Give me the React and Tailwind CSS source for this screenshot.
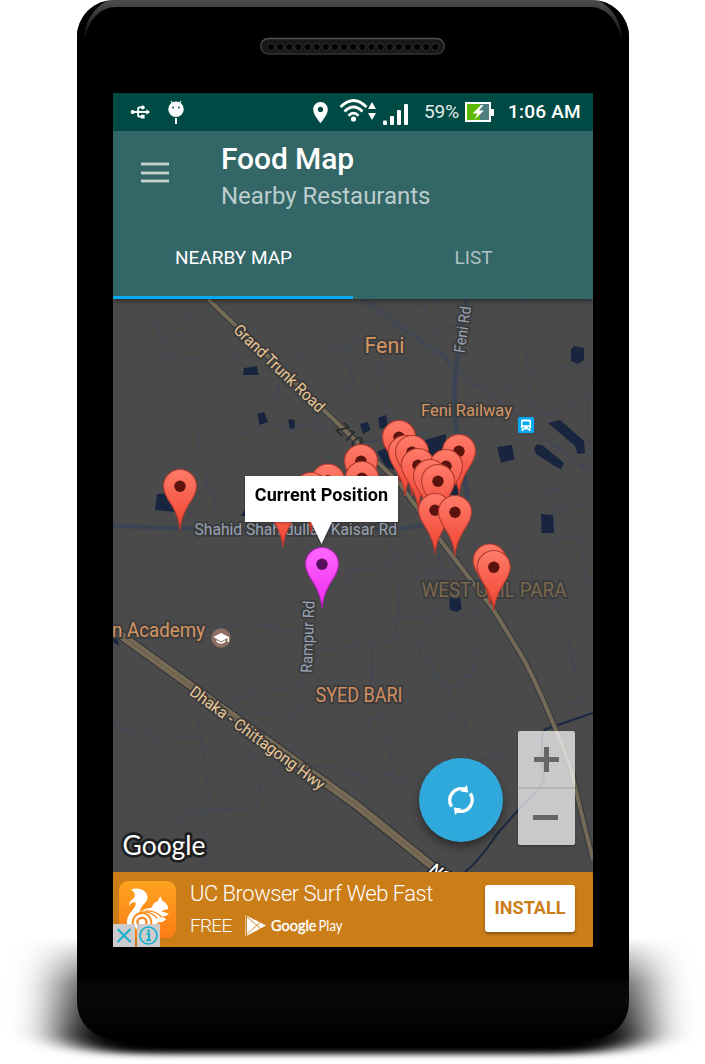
import React from "react";
import { MdLocationOn, MdUsb } from "react-icons/md";

const FONT = "Roboto, 'Noto Sans', sans-serif";

function Handset({ children }) {
  return (
    <div className="relative isolate mx-auto h-[1064px] w-[705px] overflow-hidden bg-white font-['Roboto',sans-serif]">
      <svg className="absolute inset-0 -z-10" width="705" height="1064" aria-hidden="true">
        <defs>
          <filter id="floor" x="-20%" y="-20%" width="140%" height="140%">
            <feGaussianBlur stdDeviation="23 3" />
          </filter>
          <linearGradient id="fade" x1="0" y1="938" x2="0" y2="1040" gradientUnits="userSpaceOnUse">
            <stop offset="0" stopColor="#fff" stopOpacity="0" />
            <stop offset="0.45" stopColor="#fff" stopOpacity="0.65" />
            <stop offset="1" stopColor="#fff" />
          </linearGradient>
          <mask id="floorMask" maskUnits="userSpaceOnUse" x="0" y="0" width="705" height="1064">
            <rect width="705" height="1064" fill="url(#fade)" />
          </mask>
        </defs>
        <g mask="url(#floorMask)">
          <path d="M60 900H646V1034Q630 1054 560 1054H146Q76 1054 60 1034Z" filter="url(#floor)" />
        </g>
      </svg>
      <div className="ml-[77px] flex h-[1039px] w-[552px] flex-col items-center overflow-hidden rounded-[37px] bg-black bg-[linear-gradient(to_bottom,#4a4a4a_0,#444_6px,#000_7px,#000_981px,#060606_981px,#080808_1000px,#000_1036px)]">
        <svg className="h-[93px] w-[552px] shrink-0" viewBox="77 0 552 93">
          <defs>
            <linearGradient id="rim" x1="0" y1="0" x2="0" y2="1">
              <stop offset="0" stopColor="#505050" />
              <stop offset="1" stopColor="#333" />
            </linearGradient>
            <linearGradient id="corner" x1="0" y1="0" x2="0" y2="45" gradientUnits="userSpaceOnUse">
              <stop offset="0" stopColor="#4c4c4c" />
              <stop offset="0.35" stopColor="#353535" />
              <stop offset="1" stopColor="#000" />
            </linearGradient>
          </defs>
          <path d="M77 0H629V45H77Z" fill="url(#corner)" />
          <path d="M77 93V37C77 18 90 4 108 0C92 9 84 22 84 42C88 20 100 7 116 7H590C606 7 618 20 622 42C622 22 614 9 598 0C616 4 629 18 629 37V93Z" fill="#000" />
          <rect x="260.7" y="38.5" width="183.6" height="15.5" rx="7.7" fill="#181818" stroke="url(#rim)" strokeWidth="1.4" />
          {Array.from({ length: 19 }, (_, i) => (
            <circle key={i} cx={271 + i * 9.13} cy="47" r="3.6" fill="#000" stroke="#353535" strokeWidth="0.9" />
          ))}
        </svg>
        <div className="flex h-[854px] w-[480px] shrink-0 flex-col overflow-hidden">{children}</div>
      </div>
    </div>
  );
}

function StatusBar() {
  return (
    <div className="flex h-[38px] shrink-0 items-center bg-[#004a46] text-white">
      <MdUsb className="ml-[16px] h-[22px] w-[22px] rotate-90" />
      <svg className="ml-[16px] h-[24px] w-[18px]" viewBox="0 0 18 24" fill="#fff">
        <path d="M4 1L6 4M14 1L12 4" stroke="#fff" strokeWidth="1.1" />
        <circle cx="9" cy="9.3" r="7.7" />
        <circle cx="6" cy="7.5" r=".9" fill="#004a46" />
        <circle cx="12" cy="7.5" r=".9" fill="#004a46" />
        <path d="M8 18H10V24H8Z" />
      </svg>
      <MdLocationOn className="ml-[123px] h-[25px] w-[25px]" />
      <svg className="ml-[6px] h-[28px] w-[37px]" viewBox="339 98 37 28" fill="none" stroke="#fff">
        <g strokeWidth="2.8">
          <path d="M340.5 107Q353.500 94 366.500 107" />
          <path d="M344.500 111.500Q353.500 102.500 362.500 111.500" />
          <path d="M348.500 115.800Q353.500 110.500 358.500 115.800" />
        </g>
        <circle cx="353.500" cy="119" r="2.600" fill="#fff" stroke="none" />
        <path d="M372 102L376 109H368ZM368 113H376L372 120Z" fill="#fff" stroke="none" />
      </svg>
      <svg className="ml-[7px] h-[28px] w-[26px]" viewBox="383 98 26 28" fill="#fff">
        <rect x="383" y="120.500" width="4" height="4.500" rx="1" />
        <rect x="390" y="116" width="4" height="9" rx="1" />
        <rect x="397" y="110" width="4" height="15" rx="1" />
        <rect x="404" y="104" width="4" height="21" rx="1" />
      </svg>
      <span className="ml-[15px] w-[41px] pt-[1px] text-[19px] tracking-[-0.1px] text-[#e3eeec]">59%</span>
      <svg className="h-[20px] w-[30px]" viewBox="465 103 30 20">
        <path d="M465 103H491V110H494V117H491V123H465Z" fill="#fff" />
        <path d="M467 105H480V121H467Z" fill="#5cb800" />
        <path d="M480 105H489V121H480Z" fill="#4d7f7f" />
        <path d="M481 106L472.500 114.500H477.500L474.500 120.500L484 111.500H479L483.500 106Z" fill="#fff" />
      </svg>
      <span className="ml-[13px] whitespace-nowrap pt-[1px] text-[19px] font-medium tracking-[0.2px]">1:06 AM</span>
    </div>
  );
}

function AppBar() {
  return (
    <header className="relative z-10 flex h-[168px] shrink-0 flex-col bg-[#336666] text-white shadow-[0_2px_5px_rgba(0,0,0,0.4)]">
      <div className="flex h-[84px]">
        <button className="ml-[28px] mt-[31px] flex h-[21px] w-[28px] flex-col justify-between" aria-label="Menu">
          <span className="h-[4px] w-full border-y border-[#6f9391] bg-[#c4d2d1]" />
          <span className="h-[4px] w-full border-y border-[#6f9391] bg-[#c4d2d1]" />
          <span className="h-[4px] w-full border-y border-[#6f9391] bg-[#c4d2d1]" />
        </button>
        <div className="ml-[52px] pt-[8px]">
          <h1 className="text-[30px] font-medium leading-[40px] tracking-[-0.1px]">Food Map</h1>
          <p className="text-[24px] leading-[34px] tracking-[-0.03px] text-[#bccdcd]">Nearby Restaurants</p>
        </div>
      </div>
      <div className="flex flex-1 text-[19px]">
        <div className="flex w-1/2 items-center justify-center border-b-[3px] border-[#03a9f4] pt-[5px] pl-[1px]">NEARBY MAP</div>
        <div className="flex w-1/2 items-center justify-center border-b-[3px] border-transparent pt-[5px] pl-[1px] text-[#adc2c2]">LIST</div>
      </div>
    </header>
  );
}

const LANES = [
  [110, 290, "M9 60H95L104 90L137 93L151 145L170 143L223 133Q229 120 229 78Q245 68 300 55M170 146Q164 155 162 200M110 255L120 223L145 205L160 200L225 201L237 208L310 203L382 194L390 208L435 196M530 232Q560 192 600 184Q650 174 735 162M712 168L720 225L730 275L680 320L655 340L622 360V400L632 421L675 416M530 270L503 284L512 320L495 322V404M622 402L560 405Q555 425 540 423Q530 420 528 407L495 404L434 412L430 428L360 433L266 431L270 485L285 530L298 600"],
  [350, 290, "M0 160L50 145M0 220L8 275M100 205L83 215L82 235L90 240L104 330L120 405M220 28L230 90L232 120L250 122L330 100M265 28Q245 90 253 150L300 230M516 28L530 200L540 335M540 256L600 244L625 235L660 227H729M717 28L720 180L714 220L729 285M310 235Q370 228 410 255L500 310L585 375L625 369L715 313L714 370L722 500L735 510M0 462L170 440L300 412Q320 420 322 450"],
  [110, 480, "M285 0L298 27L314 30L318 130M735 270H712L711 310L660 315L600 320L596 370M240 445L340 440L430 430L440 433L482 438L495 447L545 454L575 452M616 520L630 506H680L735 500M580 575V600"],
  [350, 480, "M0 270L125 262L127 230L117 160M127 230L200 225L262 207M265 222L285 290L320 258M145 305L200 298L215 285L280 270M145 305L148 390L130 480L65 490L0 500M65 490V600M130 480L208 478M145 410H240M318 380L245 400L248 492H210L208 478M210 495L213 540L247 545V600M395 65L445 60L460 45L560 38L610 30Q640 20 645 55Q650 80 620 88L612 90L617 170L613 220L587 250V305L600 355L625 370L655 480L680 600M617 172H692L709 290L729 325M620 88L729 67M460 160L470 165L490 195L545 265L549 305L490 320M370 190L400 245L430 280M320 405L345 410L405 390M458 460L446 472L445 495L400 513L365 518V545L375 583L340 590"],
  [110, 670, "M9 156L25 158L32 180L75 183L80 188L125 187L133 210L170 209L190 203L270 199M260 110Q270 180 278 240L303 417M278 240L333 242L340 256L485 260L550 242L553 125L390 131L362 125L360 90L415 80L420 66L455 62L570 52L580 20V0M580 50L583 115L550 125M380 415L410 374L449 350L460 328L498 320L505 295L530 283M450 350L441 414L290 420L208 432L206 456L180 462L100 500M292 420L274 605M9 522L100 512M590 290L680 292L710 310L735 309"],
  [350, 670, "M63 0V55L95 80V145H56L55 205L118 209L130 325L165 322L170 334L220 323M0 310L40 320L130 315M40 320L52 420M250 0L260 20L280 55L340 43V20L375 15V0M295 55L305 150H345L349 230L355 265M387 272L480 243L580 212M580 120L620 105L665 98L690 102M675 0L690 80L735 235M640 340L735 327M425 470L450 530L458 605"],
];

const PINS = [
  [399, 481], [459, 495], [405, 496], [412, 496], [361, 505], [418, 509], [446, 510], [430, 520],
  [362, 522], [328, 524.5], [438, 525], [180, 530], [311, 533], [283, 547.5], [435, 554], [455, 556],
  [489.7, 604.5], [493.8, 611],
];

function Pin({ x, y, fill = "url(#redPin)", edge = "#b03a2e", dot = "#5c130d" }) {
  return (
    <g transform={`translate(${x} ${y})`}>
      <path
        d="M0 0C-1 -11 -4 -17.500 -8.500 -25C-12 -31 -16.500 -36 -16.500 -44A16.500 16.500 0 0 1 16.500 -44C16.500 -36 12 -31 8.500 -25C4 -17.500 1 -11 0 0Z"
        fill={fill}
        stroke={edge}
        strokeWidth="1.1"
      />
      <circle cy="-43.700" r="5.700" fill={dot} />
    </g>
  );
}

function Label({ x, y, a = 0, w, size, fill, children }) {
  return (
    <text
      transform={`translate(${x} ${y}) rotate(${a})`}
      textLength={w}
      lengthAdjust="spacingAndGlyphs"
      fontSize={size}
      fill={fill}
      stroke="#3c3c3c"
      strokeWidth="4"
      strokeLinejoin="round"
      paintOrder="stroke"
    >
      {children}
    </text>
  );
}

function StreetMap() {
  const trunk = "M208 299L355 440L400 484L438 537L493 609L523 658Q535 680 553 723T573 777T593 860";
  const hwy = "M113 629L122 636L176 675L355 804L442 874";
  return (
    <svg className="absolute inset-0 h-full w-full" viewBox="113 299 480 573" fontFamily={FONT}>
      <defs>
        <linearGradient id="redPin" x1="0" y1="0" x2="0" y2="1">
          <stop offset="0" stopColor="#ff7b69" />
          <stop offset="1" stopColor="#f0412f" />
        </linearGradient>
        <linearGradient id="pinkPin" x1="0" y1="0" x2="0" y2="1">
          <stop offset="0" stopColor="#ff68ff" />
          <stop offset="1" stopColor="#ee2af0" />
        </linearGradient>
      </defs>
      <rect x="113" y="299" width="480" height="573" fill="#4a4a4a" />
      {LANES.map(([x, y, d]) => (
        <path key={`${x}-${y}`} d={d} transform={`translate(${x} ${y}) scale(0.33333)`} fill="none" stroke="#414854" strokeWidth="4" strokeLinejoin="round" />
      ))}
      <g fill="none" stroke="#3a4454">
        <path d="M113 526L200 529L300 531L400 529L430 524" strokeWidth="4" />
        <path d="M467 299L457 360Q453 385 456 425T463 470L468 500" strokeWidth="4.500" />
        <path d="M360 299L447 361L455 369L593 474M365 299L450 360" stroke="#414755" strokeWidth="1.800" />
        <path d="M368 305l3 -3M395 326l3 -3M421 346l3 -3M446 362l3 -3M474 387l3 -3M553 447l3 -3M580 467l3 -3" strokeWidth="1.500" />
      </g>
      <g fill="#17253f">
        <path d="M244 368L257 366L258.500 375H243Z" />
        <path d="M257.500 414L264 412L268 422L259.500 425Z" />
        <path d="M288 419L294.500 420L295 428L290 429Z" />
        <path d="M571 349L574 346L584 348V360L578 364L571 361Z" />
        <path d="M360 424L368 422L370.500 430L363 434Z" />
        <path d="M378 418L386 415L388 427L380 429Z" />
        <path d="M425 440L446 434V455L432 462ZM377 452L388 447L394 470L386 467Z" />
        <path d="M497 447L512 445L514.500 459L501 463Z" />
        <path d="M548 423L560 420L584 441L585 453L577.500 454L575 446Z" />
        <path d="M534 448L537 444.500L542 445L564 463L561 469L556 467L536 454Z" />
        <path d="M157 494L175 493V512L155 510Z" />
        <path d="M241 516L248 505V516Z" />
        <path d="M541 514L553 515L554 533H541.500Z" />
        <path d="M449 596L460 595L461.500 609L457 612L450 610Z" />
        <path d="M113 638L117 639L119.500 646L113 642Z" />
        <path d="M450 485H458V495H450Z" />
      </g>
      <path d="M593 713L546 729Q541 731 542 750L544 779L540 788L520 808L497 834Q480 860 465 872" fill="none" stroke="#1a2740" strokeWidth="2" />
      <g fill="none">
        <path d={trunk} stroke="#33373c" strokeWidth="6" />
        <path d={trunk} stroke="#756a58" strokeWidth="4" />
        <path d={hwy} stroke="#2c3036" strokeWidth="10" />
        <path d={hwy} stroke="#776a54" strokeWidth="8" />
        <path d={hwy} stroke="#665d50" strokeWidth="1" />
      </g>

      <text transform="translate(335 430) rotate(43)" fontSize="17" fill="#262626">Z10</text>
      <Label x={232.5} y={331} a={43.800} w={119} size={16} fill="#ebc795">Grand Trunk Road</Label>
      <Label x={188.5} y={694} a={36.300} w={163} size={16} fill="#ebc795">Dhaka - Chittagong Hwy</Label>
      <Label x={464.500} y={353.5} a={-82} w={47} size={15.5} fill="#98a2b3">Feni Rd</Label>
      <Label x={312} y={673} a={-88} w={72} size={16} fill="#98a2b3">Rampur Rd</Label>
      <Label x={194.5} y={535.3} a={0} w={202.5} size={16} fill="#98a2b3">Shahid Shahidullah Kaisar Rd</Label>
      <Label x={364.500} y={352.700} w={40} size={22} fill="#d59563">Feni</Label>
      <Label x={421} y={415.700} w={91} size={16.500} fill="#d59563">Feni Railway</Label>
      <Label x={421.500} y={596.500} w={145} size={20} fill="#78674f">WEST UKIL PARA</Label>
      <Label x={315.500} y={702.300} w={87} size={19.500} fill="#d08e62">SYED BARI</Label>
      <Label x={112} y={636.7} w={93} size={20} fill="#d59563">n Academy</Label>

      <g transform="translate(221 638)">
        <circle r="9.700" fill="#8d6e63" />
        <path d="M-7.500 -1L0 -5L8 -1V4H6.500V0L0 3.500ZM-4.500 2L0 4.500L4.500 2V4Q0 7.500 -4.500 4Z" fill="#fff" />
      </g>
      <g transform="translate(518 417)">
        <rect width="16" height="16" rx="1.500" fill="#03a9f4" />
        <path d="M4.500 2.500H11.500Q13 2.500 13 4V10.500Q13 12 11.500 12L13 14H11L10 12.500H6L5 14H3L4.500 12Q3 12 3 10.500V4Q3 2.500 4.500 2.500Z" fill="#fff" />
        <path d="M4.500 4.500H11.500V8.200H4.500ZM4.500 10H6.200V11.200H4.500ZM9.800 10H11.500V11.200H9.800Z" fill="#03a9f4" />
      </g>

      {PINS.map(([x, y]) => <Pin key={`${x}-${y}`} x={x} y={y} />)}
      <Pin x={322} y={608} fill="url(#pinkPin)" edge="#b020b4" dot="#5a0f5e" />

      <text transform="translate(428.500 871.500) rotate(34)" fontSize="16" fontWeight="500" fontStyle="italic" fill="#fff" stroke="#222" strokeWidth="3" paintOrder="stroke">N1</text>
      <text x="122.500" y="854.500" fontFamily="Lato, 'Open Sans', sans-serif" fontSize="27" textLength="83" lengthAdjust="spacingAndGlyphs" fill="#fff" stroke="#1f1f1f" strokeWidth="5.500" strokeLinejoin="round" paintOrder="stroke">Google</text>
    </svg>
  );
}

function MapPane() {
  return (
    <main className="relative h-[573px] shrink-0 overflow-hidden bg-[#4a4a4a]">
      <StreetMap />
      <div className="absolute left-[132px] top-[177px] flex flex-col items-center drop-shadow-[0_1px_1px_rgba(0,0,0,0.35)]">
        <div className="flex h-[46px] w-[153px] items-center justify-center whitespace-nowrap bg-white pb-[9px] text-[18px] font-bold tracking-[0.08px] text-black">
          Current Position
        </div>
        <svg className="h-[22px] w-[21px]" viewBox="0 0 21 22"><path d="M0 0H21L10.500 22Z" fill="#fff" /></svg>
      </div>
      <button className="absolute left-[306px] top-[459px] flex h-[84px] w-[84px] items-center justify-center rounded-full bg-[#2fa8dc] shadow-[0_5px_9px_rgba(0,0,0,0.4)]" aria-label="Refresh">
        <svg className="h-[30px] w-[30px]" viewBox="446 785 30 30" fill="none" stroke="#fff" strokeWidth="3.400">
          <path d="M451.600 806.500A11.600 11.600 0 0 1 465 789.200" />
          <path d="M470.400 793.500A11.600 11.600 0 0 1 457 810.800" />
          <path d="M467 785L468.200 792.500L460.500 791.500ZM455 815L453.800 807.500L461.500 808.500Z" fill="#fff" stroke="none" />
        </svg>
      </button>
      <div className="absolute left-[405px] top-[432px] flex h-[114px] w-[57px] flex-col rounded-[2px] bg-white/70 shadow-[0_1px_2px_rgba(0,0,0,0.3)]">
        <button className="flex h-[58px] items-center justify-center border-b-2 border-[#a8a8a8]/60" aria-label="Zoom in">
          <svg className="h-[25px] w-[25px]" viewBox="0 0 25 25"><path d="M10 0H15V10H25V15H15V25H10V15H0V10H10Z" fill="#666" /></svg>
        </button>
        <button className="flex flex-1 items-center justify-center pr-[2px] pt-[1px]" aria-label="Zoom out">
          <span className="h-[5px] w-[25px] bg-[#666]" />
        </button>
      </div>
    </main>
  );
}

function AdBanner() {
  return (
    <footer className="relative flex h-[75px] shrink-0 rounded-[1px] bg-[#cb7d18] text-white">
      <svg className="ml-[6px] mt-[9px] h-[57px] w-[57px] shrink-0" viewBox="18 27 171 171">
        <defs>
          <linearGradient id="uc" x1="0" y1="0" x2="0" y2="1">
            <stop offset="0" stopColor="#ffa31f" />
            <stop offset="1" stopColor="#fb7d16" />
          </linearGradient>
        </defs>
        <rect x="18" y="27" width="171" height="171" rx="27" fill="url(#uc)" />
        <path d="M54 53Q78 44 95 58Q112 75 96 93Q82 104 80 121Q98 108 116 107Q121 91 134 88L142 73L148 86Q165 94 166 111Q152 113 145 118L168 125Q158 134 146 133L160 142Q150 152 136 151L128 160H42Q38 137 58 115Q74 96 66 91Q55 88 47 103Q48 87 64 77Q70 62 54 53Z" fill="#fff" />
        <circle cx="87" cy="151" r="31" fill="#fb8b1a" />
        <circle cx="87" cy="151" r="25" fill="#fff" />
        <circle cx="87" cy="151" r="17" fill="#fb861a" />
        <circle cx="87" cy="151" r="10" fill="#fff" />
        <path d="M78 123Q108 112 133 139M98 117Q126 114 147 136" fill="none" stroke="#fb8b1a" strokeWidth="4" />
      </svg>
      <div className="ml-[14px] flex w-[280px] flex-col">
        <p className="mt-[7px] whitespace-nowrap text-[22px] font-light leading-[30px] tracking-[-0.5px]">UC Browser Surf Web Fast</p>
        <div className="flex h-[34px] items-center">
          <span className="w-[55px] text-[19px] font-light tracking-[-0.7px]">FREE</span>
          <svg className="h-[24px] w-[100px]" viewBox="0 0 100 24">
            <path d="M0.500 1L21 11.500L0.500 22.500Z" fill="#fff" />
            <path d="M1 2L16 15M1 21L15 8.500M1.500 1V22" stroke="#cb7d18" strokeWidth="0.900" fill="none" />
            <text x="26" y="16.500" fontFamily="Lato, sans-serif" fontSize="14.5" fontWeight="400" fill="#fff" stroke="#fff" strokeWidth="0.4" textLength="45.500" lengthAdjust="spacingAndGlyphs">Google</text>
            <text x="73.500" y="16.500" fontFamily="Lato, sans-serif" fontSize="14.5" fill="#fff" textLength="24" lengthAdjust="spacingAndGlyphs">Play</text>
          </svg>
        </div>
      </div>
      <button className="ml-[15px] mt-[13px] flex h-[47px] w-[90px] items-center justify-center rounded-[3px] bg-white pb-[2px] text-[18px] font-bold text-[#cb7d18] shadow-[0_2px_3px_rgba(0,0,0,0.35)]">
        INSTALL
      </button>
      <div className="absolute bottom-0 left-0 flex h-[23px] gap-[2px]">
        <svg className="h-[23px] w-[22px] bg-[#cccccc]" viewBox="0 0 22 23"><path d="M4.500 5L17.500 18M17.500 5L4.500 18" stroke="#15afce" strokeWidth="2" /></svg>
        <svg className="h-[23px] w-[23px] bg-[#cccccc]" viewBox="0 0 23 23" fill="none" stroke="#15afce">
          <circle cx="11.500" cy="11.500" r="8.500" strokeWidth="1.700" />
          <path d="M9.500 9.800H12V16M9 16.300H14" strokeWidth="2" />
          <circle cx="11.500" cy="6.800" r="1.400" fill="#15afce" stroke="none" />
        </svg>
      </div>
    </footer>
  );
}

export default function App() {
  return (
    <Handset>
      <StatusBar />
      <AppBar />
      <MapPane />
      <AdBanner />
    </Handset>
  );
}
